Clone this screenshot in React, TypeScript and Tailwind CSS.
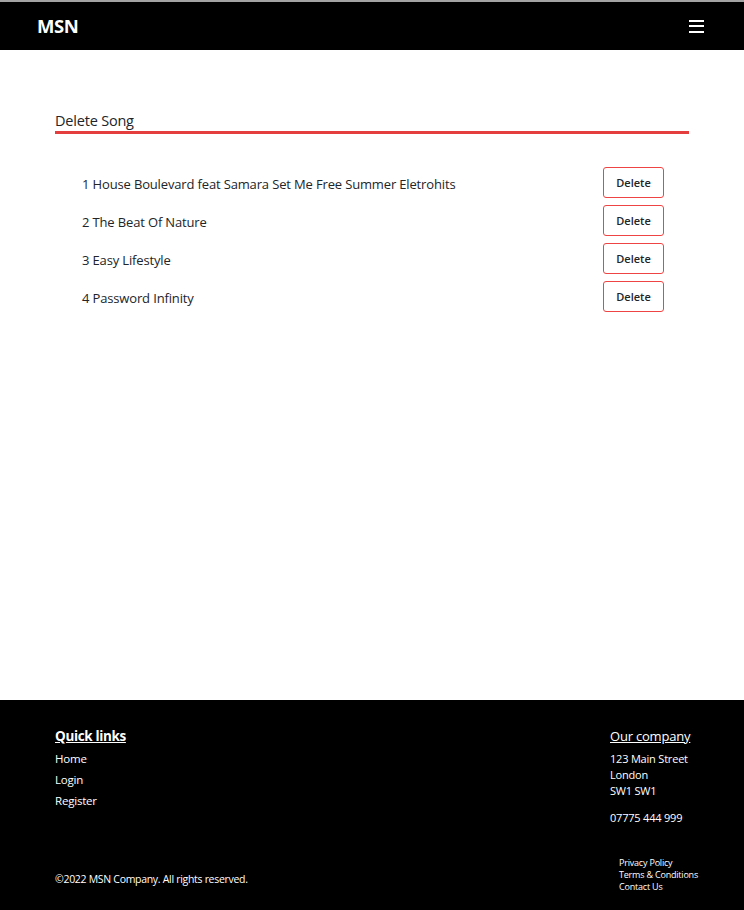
import React from 'react';

const songs = [
  { id: 1, title: 'House Boulevard feat Samara Set Me Free Summer Eletrohits' },
  { id: 2, title: 'The Beat Of Nature' },
  { id: 3, title: 'Easy Lifestyle' },
  { id: 4, title: 'Password Infinity' },
];

const Header: React.FC = () => (
  <header className="bg-black border-t-2 border-[#a3a3a3] h-[50px] flex items-center justify-between pl-[37px] pr-[40px]">
    <span className="text-white font-bold text-[18.5px] tracking-[-0.4px]">MSN</span>
    <div className="flex flex-col gap-[3.5px] w-[15px]">
      <span className="h-[2px] bg-white block" />
      <span className="h-[2px] bg-white block" />
      <span className="h-[2px] bg-white block" />
    </div>
  </header>
);

const Footer: React.FC = () => (
  <footer className="bg-black text-white h-[210px] px-[55px] pt-[27px] pb-[17px] flex flex-col whitespace-nowrap">
    <div className="flex justify-between">
      <div>
        <h3 className="font-bold underline text-[13.5px] leading-[18px] tracking-[-0.35px]">Quick links</h3>
        <ul className="text-[11.5px] mt-[6px] flex flex-col gap-[5px] leading-[16px] tracking-[-0.2px]">
          <li>Home</li>
          <li>Login</li>
          <li>Register</li>
        </ul>
      </div>
      <div className="w-[80px] mr-[-1px]">
        <h3 className="underline text-[13px] leading-[18px] tracking-[-0.2px]">Our company</h3>
        <p className="text-[11px] leading-[16px] mt-[6px] tracking-[-0.2px]">
          123 Main Street<br />London<br />SW1 SW1
        </p>
        <p className="text-[11px] leading-[16px] mt-[11px] tracking-[-0.2px]">07775 444 999</p>
      </div>
    </div>
    <div className="flex justify-between items-end mt-auto">
      <p className="text-[10.5px] leading-[16px] mb-[6px] tracking-[-0.3px]">©2022 MSN Company. All rights reserved.</p>
      <ul className="text-[9px] leading-[12px] w-[80px] mr-[-10px] tracking-[-0.2px]">
        <li>Privacy Policy</li>
        <li>Terms &amp; Conditions</li>
        <li>Contact Us</li>
      </ul>
    </div>
  </footer>
);

const App: React.FC = () => {
  return (
    <div className="min-h-[910px] flex flex-col font-['Open_Sans',sans-serif] text-[#212529]">
      <Header />
      <main className="flex-grow h-[650px] px-[55px] pt-[62px]">
        <h2 className="text-[14.5px] leading-[18px] pb-[1px] border-b-[3px] border-[#e53e3e] tracking-[-0.2px]">Delete Song</h2>
        <ul className="mt-[33px] pl-[27px] pr-[25px] flex flex-col gap-[7px]">
          {songs.map((s) => (
            <li key={s.id} className="flex items-center justify-between h-[31px]">
              <span className="text-[13px] tracking-[-0.15px] pt-[4px]">
                {s.id} {s.title}
              </span>
              <button className="w-[61px] h-[31px] border border-[#ef4444] rounded-[3px] text-[11px] font-semibold bg-white pt-[1px]">
                Delete
              </button>
            </li>
          ))}
        </ul>
      </main>
      <Footer />
    </div>
  );
};

export default App;
